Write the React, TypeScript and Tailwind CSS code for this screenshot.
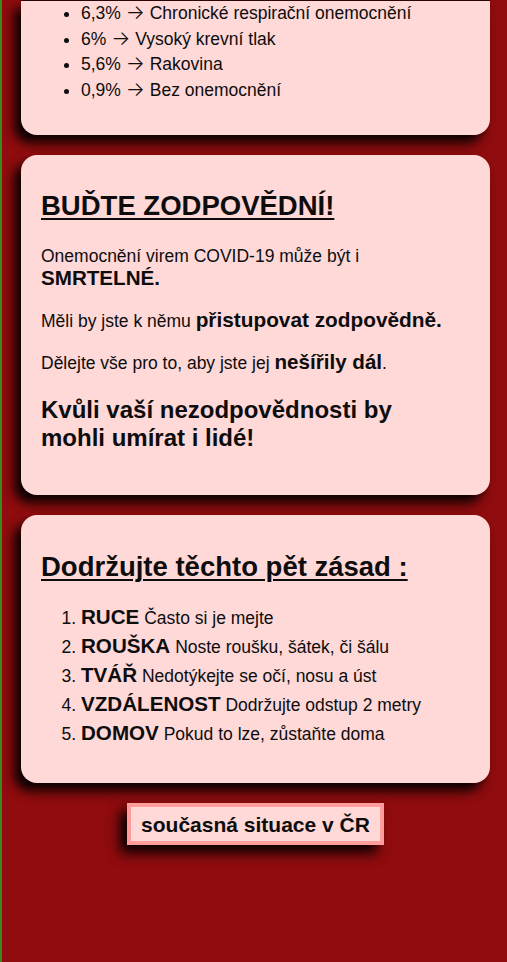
const risks = [
  { pct: "6,3%", label: "Chronické respirační onemocnění" },
  { pct: "6%", label: "Vysoký krevní tlak" },
  { pct: "5,6%", label: "Rakovina" },
  { pct: "0,9%", label: "Bez onemocnění" },
];

const rules = [
  { term: "RUCE", text: "Často si je mejte" },
  { term: "ROUŠKA", text: "Noste roušku, šátek, či šálu" },
  { term: "TVÁŘ", text: "Nedotýkejte se očí, nosu a úst" },
  { term: "VZDÁLENOST", text: "Dodržujte odstup 2 metry" },
  { term: "DOMOV", text: "Pokud to lze, zůstaňte doma" },
];

const card =
  "bg-[#ffd8d8] rounded-[16px] shadow-[-7px_8px_12px_rgba(0,0,0,0.95)] px-5";

const Arrow = () => (
  <span className="font-['Inter'] font-light text-[20px] leading-none">→</span>
);

export default function App() {
  return (
    <div
      className="min-h-screen bg-[#900c0e] border-l-2 border-[#3d8a1c] text-[#0d0d0d] overflow-hidden"
      style={{ fontFamily: '"Liberation Sans", Arial, sans-serif' }}
    >
      <div className="pl-[19px] pr-[17px] flex flex-col gap-5">
        {/* first card, scrolled past its top */}
        <div className={`${card} rounded-t-none border-t border-[#2a0606] pb-[32px]`}>
          <ul className="list-disc pl-10 text-[17.5px] leading-[25.5px]">
            {risks.map((r) => (
              <li key={r.pct}>
                {r.pct} <Arrow /> {r.label}
              </li>
            ))}
          </ul>
        </div>

        <div className={`${card} pt-[35px] pb-[43px]`}>
          <h2 className="text-[27.5px] leading-[31px] font-bold underline decoration-2 underline-offset-[3px]">
            BUĎTE ZODPOVĚDNÍ!
          </h2>
          <p className="mt-[24px] text-[17.5px] leading-[23px]">
            Onemocnění virem COVID-19 může být i{" "}
            <b className="text-[20.6px] leading-none">SMRTELNÉ.</b>
          </p>
          <p className="mt-[19px] text-[17.5px] leading-[23px]">
            Měli by jste k němu{" "}
            <b className="text-[20.8px] leading-none">přistupovat zodpovědně.</b>
          </p>
          <p className="mt-[19px] text-[17.5px] leading-[23px]">
            Dělejte vše pro to, aby jste jej{" "}
            <b className="text-[20.6px] leading-none">nešířily dál</b>.
          </p>
          <h3 className="mt-[21px] max-w-[365px] text-[24px] leading-[28px] font-bold">
            Kvůli vaší nezodpovědnosti by mohli umírat i lidé!
          </h3>
        </div>

        <div className={`${card} pt-[36px] pb-[34px]`}>
          <h2 className="text-[27.5px] leading-[31px] font-bold underline decoration-2 underline-offset-[3px]">
            Dodržujte těchto pět zásad :
          </h2>
          <ol className="list-decimal pl-10 mt-[22px] text-[17.5px] leading-[29px]">
            {rules.map((r) => (
              <li key={r.term}>
                <b className="text-[20.6px] leading-none">{r.term}</b> {r.text}
              </li>
            ))}
          </ol>
        </div>

        <div className="flex justify-center pb-32">
          <button className="bg-[#ffd8d8] border-4 border-[#ff9c9c] px-[10px] h-[42px] text-[21px] leading-none font-bold shadow-[-7px_8px_12px_rgba(0,0,0,0.95)]">
            současná situace v ČR
          </button>
        </div>
      </div>
    </div>
  );
}
